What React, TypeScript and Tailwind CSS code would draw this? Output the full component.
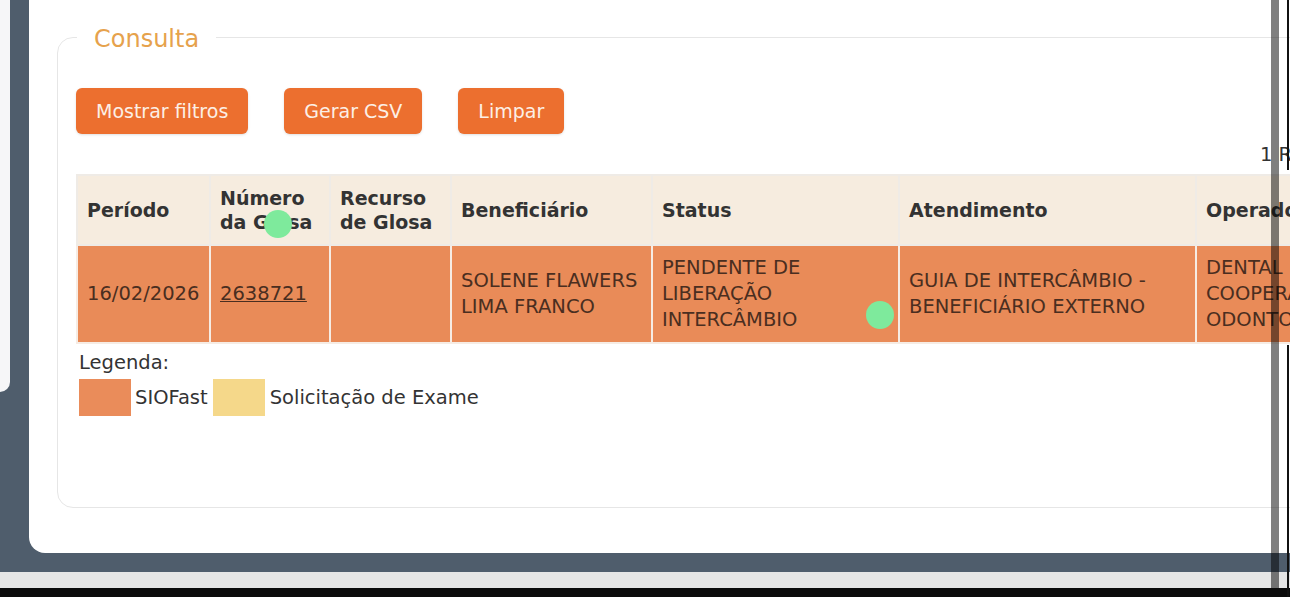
export default function App() {
  const headers = [
    { label: <>Período</>, w: 'w-[133px]' },
    { label: <>Número<br />da Glosa</>, w: 'w-[120px]' },
    { label: <>Recurso<br />de Glosa</>, w: 'w-[121px]' },
    { label: <>Beneficiário</>, w: 'w-[201px]' },
    { label: <>Status</>, w: 'w-[247px]' },
    { label: <>Atendimento</>, w: 'w-[297px]' },
    { label: <>Operadora</>, w: 'w-[200px]' },
  ];

  const cell = 'border-2 border-[#f6ece4] px-[9px] py-[9px] leading-[26px] whitespace-nowrap';

  return (
    <div className="relative w-[1290px] h-[597px] overflow-hidden bg-[#0b0b0b] font-['DejaVu_Sans','Verdana',sans-serif] text-[#333]">
      <div className="h-[588px] bg-[#e5e5e5]">
        <div className="h-[572px] bg-[#4f5d6c] flex">
          {/* left edge panel */}
          <div className="w-[29px] shrink-0">
            <div className="w-[10px] h-[392px] bg-[#f6f6f8] rounded-br-[10px]" />
          </div>

          {/* main card */}
          <div className="flex-1 h-[553px] bg-white rounded-bl-[16px] pt-[23px] pl-[28px] overflow-hidden">
            <fieldset className="w-[1400px] h-[485px] border border-[#e6e6e6] rounded-[16px] px-[18px]">
              <legend className="ml-px px-[17px] text-[24px] leading-[28px] text-[#e6a24c]">
                <span className="relative top-[2px]">Consulta</span>
              </legend>

              <div className="mt-[37px] flex gap-[36px]">
                {['Mostrar filtros', 'Gerar CSV', 'Limpar'].map((b) => (
                  <button
                    key={b}
                    className="px-[20px] py-[11px] text-[19px] leading-[24px] text-[#fcefe6] bg-[#ec6f2f] rounded-[6px] shadow-sm"
                  >
                    {b}
                  </button>
                ))}
              </div>

              <div className="mt-[9px] ml-[1184px] text-[19.5px] leading-[24px] whitespace-nowrap">1 Registro(s)</div>

              <table className="mt-[7px] table-fixed border-collapse w-[1319px] text-[19.5px]">
                <thead>
                  <tr>
                    {headers.map((h, i) => (
                      <th
                        key={i}
                        className={`${h.w} bg-[#f6ecdf] border-2 border-[#efebe6] px-[9px] py-[10px] leading-[24px] text-left font-bold text-[19px] text-[#333]`}
                      >
                        {h.label}
                      </th>
                    ))}
                  </tr>
                </thead>
                <tbody>
                  <tr className="bg-[#e98b58] text-[#4a2e20]">
                    <td className={cell}>16/02/2026</td>
                    <td className={cell}>
                      <span className="underline">2638721</span>
                    </td>
                    <td className={cell}></td>
                    <td className={cell}>SOLENE FLAWERS<br />LIMA FRANCO</td>
                    <td className={cell}>PENDENTE DE<br />LIBERAÇÃO<br />INTERCÂMBIO</td>
                    <td className={cell}>GUIA DE INTERCÂMBIO -<br />BENEFICIÁRIO EXTERNO</td>
                    <td className={cell}>DENTAL<br />COOPERATIVA<br />ODONTOLÓGICA</td>
                  </tr>
                </tbody>
              </table>

              <div className="mt-[7px] ml-[3px] text-[19.5px] leading-[24px]">Legenda:</div>
              <div className="mt-[4px] ml-[3px] flex items-center text-[19.5px] leading-[24px]">
                <span className="w-[52px] h-[37px] bg-[#ea8c5a]" />
                <span className="ml-[4px]">SIOFast</span>
                <span className="ml-[5px] w-[52px] h-[37px] bg-[#f5d88a]" />
                <span className="ml-[5px]">Solicitação de Exame</span>
              </div>
            </fieldset>
          </div>
        </div>
      </div>

      {/* touch indicators */}
      <div className="absolute left-[264px] top-[210px] w-[28px] h-[28px] rounded-full bg-[#7eea9c]" />
      <div className="absolute left-[866px] top-[301px] w-[28px] h-[28px] rounded-full bg-[#7eea9c]" />

      {/* scrollbar overlay */}
      <div className="absolute left-[1271px] top-0 w-[8px] h-[588px] bg-black/50" />
      <div className="absolute left-[1287px] top-0 w-[2px] h-[170px] bg-[#111]" />
      <div className="absolute left-[1287px] top-[345px] w-[2px] h-[252px] bg-[#111]" />
    </div>
  );
}
